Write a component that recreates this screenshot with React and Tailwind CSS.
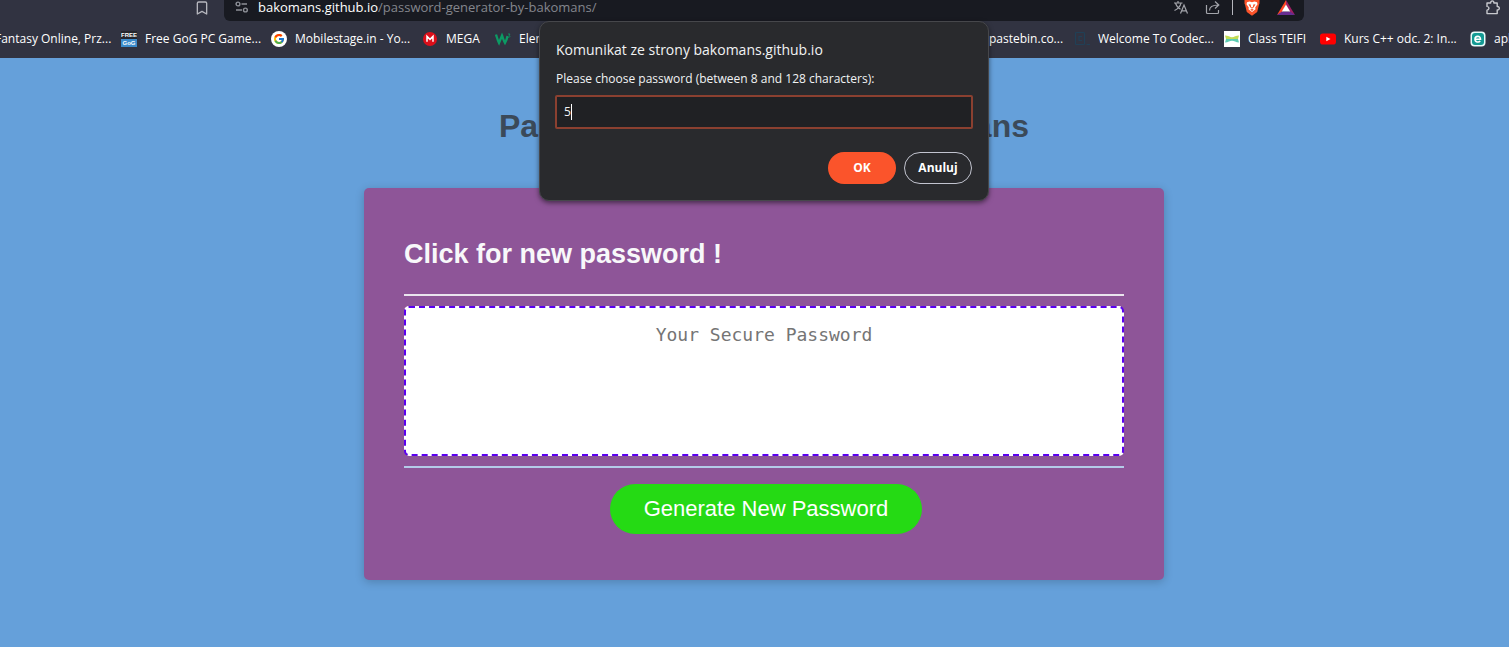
import { useState } from "react";
import { Bookmark } from "lucide-react";
import { FcGoogle } from "react-icons/fc";

function SettingsIcon() {
  return (
    <svg viewBox="0 0 14 14" className="h-3.5 w-3.5 shrink-0" fill="none" stroke="#8d9097" strokeWidth="1.4">
      <circle cx="3" cy="4" r="1.9" />
      <path d="M6.5 4H12M1 10h6" />
      <circle cx="10.4" cy="10" r="1.9" />
    </svg>
  );
}

function TranslateIcon() {
  return (
    <svg viewBox="0 0 16 16" className="h-4 w-4" fill="none" stroke="#a3a5ab" strokeWidth="1.2">
      <path d="M1 3h8.5M5 1v2M2.500 3.200c.8 3 3 5 5 6M8 3.200c-.8 3.500-3.500 6-6.500 7.300" />
      <path d="M7.500 13.500 11 5l3.500 8.500M8.800 10.800h4.400" />
    </svg>
  );
}

function ShareIcon() {
  return (
    <svg viewBox="0 0 16 16" className="h-4 w-4" fill="none" stroke="#a3a5ab" strokeWidth="1.2">
      <path d="M1.500 5v7.500c0 .6.400 1 1 1h10c.6 0 1-.4 1-1V10" />
      <path d="M4.500 10.500c0-3.500 2.500-5.500 9-5.500M10 1.500 13.800 5 10 8.500" />
    </svg>
  );
}

function BraveIcon() {
  return (
    <svg viewBox="0 1 16 16" className="h-4 w-4">
      <path d="M.5 0h15v4.500l-.6 1.500-1.700 7L8 16.800 2.800 13 1.100 6 .5 4.500z" fill="#fb542b" />
      <path d="M3 3.200 5.500 2.500 8 3.200l2.500-.7 2.500.7.500 2-2.300 3.300.3 1.800L8 13l-3.500-2.700.3-1.800L2.500 5.200z" fill="#fff" />
      <path d="m4.500 5.200 2.200.3.400 2.600L8 8.600l.9-.5.400-2.600 2.200-.3-1.700 3L8 9.800 6.200 8.200zM6.200 10.600 8 9.900l1.800.7L8 12z" fill="#fb542b" />
    </svg>
  );
}

function RewardsIcon() {
  return (
    <svg viewBox="0 0 18 16" className="h-4 w-[18px]">
      <path d="M9 0 0 15l5-2.500L9 5z" fill="#ff4724" />
      <path d="m9 0 9 15-5-2.500L9 5z" fill="#9e1f63" />
      <path d="M0 15h18l-5-3.500H5z" fill="#662d91" />
      <path d="m9 4.500 4.200 7H4.800z" fill="#fff" />
    </svg>
  );
}

function ExtensionsIcon() {
  return (
    <svg viewBox="0 0 16 16" className="h-4 w-4" fill="none" stroke="#c8c9ce" strokeWidth="1.400" strokeLinejoin="round">
      <path d="M2 3h3.700c-.4-2.800 3.600-2.800 3.200 0h3.300v3.500c2.800-.3 2.800 3.700 0 3.400v3.700H2v-3.400c2.600-.2 2.600-3.600 0-3.800z" />
    </svg>
  );
}

function GogIcon() {
  return (
    <svg viewBox="0 0 16 16" className="h-4 w-4 shrink-0">
      <path d="M0 0h16v8H0z" fill="#25272d" />
      <path d="M0 8h16v8H0z" fill="#3b8bcb" />
      <text x="8" y="6.400" textAnchor="middle" fontSize="6" fontWeight="700" fill="#fff" fontFamily="Liberation Sans, sans-serif">FREE</text>
      <text x="8" y="14.200" textAnchor="middle" fontSize="6" fontWeight="700" fill="#fff" fontFamily="Liberation Sans, sans-serif">GoG</text>
    </svg>
  );
}

function GoogleIcon() {
  return (
    <span className="flex h-4 w-4 shrink-0 items-center justify-center rounded-full bg-white">
      <FcGoogle className="h-3 w-3" />
    </span>
  );
}

function MegaIcon() {
  return (
    <svg viewBox="0 0 16 16" className="h-4 w-4 shrink-0">
      <circle cx="8" cy="8" r="7" fill="#dc0f1a" />
      <path d="M5 10.800V5.400l3 3 3-3v5.400" fill="none" stroke="#fff" strokeWidth="1.500" />
    </svg>
  );
}

function W3Icon() {
  return (
    <svg viewBox="0 0 16 16" className="h-4 w-4 shrink-0" fill="none" stroke="#0c9a64">
      <path d="M1 3.500c1 3 1.500 5.500 3 8.500 1-2.500 2-5 3-7.500 1 2.500 1.500 5 3 7.500 1.200-2 2-4 2.500-7" strokeWidth="2.300" />
      <path d="M13 3h2l-1 1.500c1.500.3 1 2.300-1 1.800" strokeWidth=".8" />
    </svg>
  );
}

function CodecademyIcon() {
  return (
    <svg viewBox="0 0 16 16" className="h-4 w-4 shrink-0" fill="none" stroke="#204056" strokeWidth="1.200">
      <rect x="1.500" y="1.500" width="9" height="12" rx="1" />
      <path d="M8 5.500H5v4h3M12.500 13.500H16" />
    </svg>
  );
}

function ClassIcon() {
  return (
    <svg viewBox="0 0 16 16" className="h-4 w-4 shrink-0">
      <path d="M0 0h16v16H0z" fill="#fff" />
      <path d="M1 4.500c3 0 5 1.700 7 1.700s4-1.700 7-1.700L14 8H2z" fill="#c3dc55" />
      <path d="M2 8h12l1 3.500c-3 0-5-1.700-7-1.700s-4 1.700-7 1.700z" fill="#5ccbb2" />
    </svg>
  );
}

function YouTubeIcon() {
  return (
    <svg viewBox="0 0 16 16" className="h-4 w-4 shrink-0">
      <rect y="2.500" width="16" height="11" rx="2.800" fill="#f00" />
      <path d="m6.300 5.700 4.200 2.300-4.200 2.300z" fill="#fff" />
    </svg>
  );
}

function EIcon() {
  return (
    <svg viewBox="0 0 16 16" className="h-4 w-4 shrink-0">
      <rect x=".5" y=".5" width="15" height="15" rx="4" fill="#e8fbfa" />
      <rect x="2" y="2" width="12" height="12" rx="3" fill="#139a93" />
      <path d="M5.200 8.200h5.300c0-4-5.500-3.600-5.500 0 0 3.300 3.800 3.300 5.300 2" fill="none" stroke="#fff" strokeWidth="1.600" />
    </svg>
  );
}

const leftBookmarks = [
  { label: "Fantasy Online, Prz...", width: "w-[110px]" },
  { label: "Free GoG PC Game...", Icon: GogIcon, width: "w-[110px]" },
  { label: "Mobilestage.in - Yo...", Icon: GoogleIcon, width: "w-[111px]" },
  { label: "MEGA", Icon: MegaIcon, width: "w-[33px]" },
  { label: "Elem", Icon: W3Icon, width: "w-[110px]" },
];

const rightBookmarks = [
  { label: "pastebin.co...", width: "w-[69px]" },
  { label: "Welcome To Codec...", Icon: CodecademyIcon, width: "w-[110px]" },
  { label: "Class TEIFI", Icon: ClassIcon, width: "w-[56px]" },
  { label: "Kurs C++ odc. 2: In...", Icon: YouTubeIcon, width: "w-[110px]" },
  { label: "apl", Icon: EIcon, width: "w-[15px]" },
];

function BookmarkLink({ label, Icon, width }) {
  return (
    <a href="#" className="flex shrink-0 items-center gap-2">
      {Icon && <Icon />}
      <span className={`whitespace-nowrap ${width}`}>{label}</span>
    </a>
  );
}

function Browser() {
  return (
    <header className="bg-[#313341] font-['Open_Sans','Noto_Sans',sans-serif] text-white">
      <div className="flex h-[21px] items-start justify-between pr-2 pl-[194px]">
        <button aria-label="Bookmark this page" className="mr-3.5">
          <Bookmark className="h-4 w-4 text-[#b5b6bd]" strokeWidth={2} />
        </button>
        <div className="flex h-full flex-1 items-start rounded-b-md bg-[#181a21] pr-[9px] pl-[11px]">
          <SettingsIcon />
          <span className="ml-[9px] text-[13px] leading-3.5">
            bakomans.github.io<span className="text-[#84868d]">/password-generator-by-bakomans/</span>
          </span>
          <div className="ml-auto flex items-start">
            <button aria-label="Translate" className="mr-4"><TranslateIcon /></button>
            <button aria-label="Share" className="mr-[11px]"><ShareIcon /></button>
            <span className="mr-[11px] h-[15px] w-px bg-[#b5b6bd]" />
            <button aria-label="Brave Shields" className="mr-[17px]"><BraveIcon /></button>
            <button aria-label="Brave Rewards"><RewardsIcon /></button>
          </div>
        </div>
        <button aria-label="Extensions" className="ml-[181px]">
          <ExtensionsIcon />
        </button>
      </div>
      <nav className="flex h-[37px] items-center justify-between overflow-hidden pb-0.5 text-[12px] leading-4">
        <div className="-ml-[5px] flex gap-4">
          {leftBookmarks.map((b) => <BookmarkLink key={b.label} {...b} />)}
        </div>
        <div className="flex gap-4">
          {rightBookmarks.map((b) => <BookmarkLink key={b.label} {...b} />)}
        </div>
      </nav>
    </header>
  );
}

function PromptDialog() {
  const [value, setValue] = useState("5");
  return (
    <div className="absolute inset-x-0 top-[21px] flex justify-center pl-[19px]">
      <form
        role="dialog"
        aria-labelledby="prompt-title"
        onSubmit={(e) => e.preventDefault()}
        className="w-[450px] rounded-[10px] border border-[#46474b] bg-[#292a2d] px-[15px] pt-[18px] pb-4 font-['Open_Sans','Noto_Sans',sans-serif] text-[#f1f3f4] shadow-[0_2px_5px_rgba(0,0,0,0.5)]"
      >
        <h2 id="prompt-title" className="px-px text-[14px] leading-5">Komunikat ze strony bakomans.github.io</h2>
        <label htmlFor="prompt-value" className="mt-[9px] block px-px text-[12px] leading-5">
          Please choose password (between 8 and 128 characters):
        </label>
        <div className="mt-1.5 flex h-[34px] items-center rounded-xs border-2 border-[#8b4030] bg-[#202124] px-[7px] text-[12px]">
          <input
            id="prompt-value"
            value={value}
            onChange={(e) => setValue(e.target.value)}
            className="w-[7px] bg-transparent outline-none"
          />
          <span className="h-4 w-px bg-white" />
        </div>
        <div className="mt-[23px] flex justify-end gap-2 px-px text-[12px] font-bold text-white">
          <button type="submit" className="h-8 w-[68px] rounded-full bg-[#fb542b]">OK</button>
          <button type="button" className="h-8 w-[68px] rounded-full border border-[#c2c4cf]">Anuluj</button>
        </div>
      </form>
    </div>
  );
}

export default function App() {
  return (
    <div className="relative min-h-screen bg-[#65a0da] font-['Liberation_Sans',Arial,sans-serif]">
      <Browser />
      <main className="flex flex-col items-center pt-12 pl-[19px]">
        <h1 className="text-[32px] leading-10 font-bold text-[#3b4a59]">Password Generator by Bakomans</h1>
        <section className="mt-[42px] w-full max-w-[800px] rounded-[5px] bg-[#8e5598] px-10 pt-[46px] pb-[46px] shadow-[0_2px_10px_rgba(0,0,0,0.2)]">
          <h2 className="text-[27px] leading-10 font-bold text-[#f8f8fa]">Click for new password !</h2>
          <div className="mt-5 border-y-2 border-t-[#eae4ee] border-b-[#b4cbe9] py-2.5">
            <textarea
              aria-label="Your Secure Password"
              readOnly
              placeholder="Your Secure Password"
              className="block h-[150px] w-full resize-none rounded-[5px] border-2 border-dashed border-[#5a00f0] bg-white px-5 py-[15px] text-center font-['DejaVu_Sans_Mono',monospace] text-[18px] leading-6 outline-none placeholder:text-[#757575]"
            />
          </div>
          <div className="mt-4 flex justify-center pl-1">
            <button className="h-[50px] w-[312px] rounded-full bg-[#25da14] pb-0.5 text-[22px] text-white">
              Generate New Password
            </button>
          </div>
        </section>
      </main>
      <PromptDialog />
    </div>
  );
}
